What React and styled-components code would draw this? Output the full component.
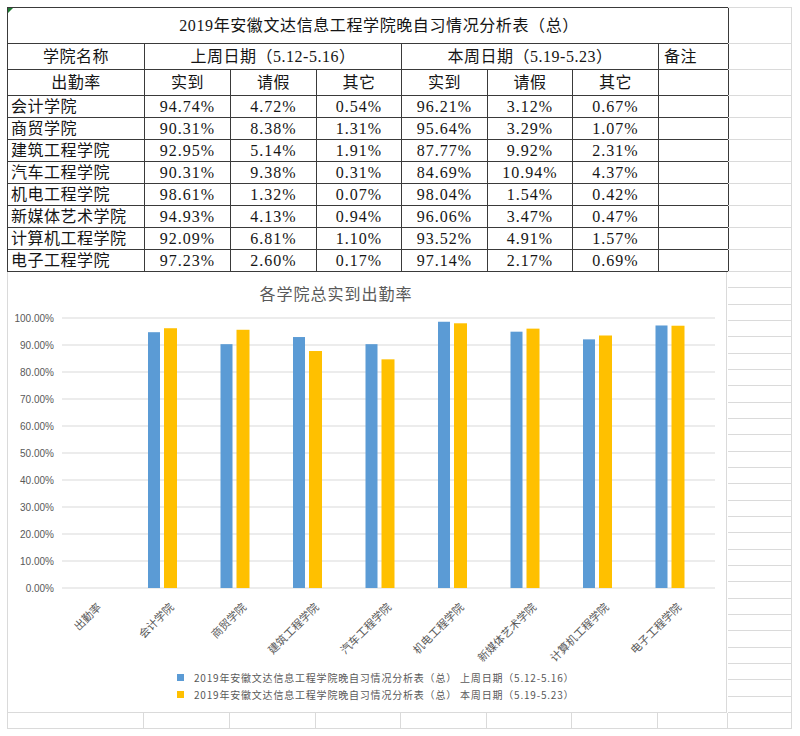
import React from 'react';
import styled, { createGlobalStyle } from 'styled-components';

const GlobalStyle = createGlobalStyle`
  html, body {
    margin: 0;
    padding: 0;
    background: #ffffff;
  }
`;

const colleges = [
  { name: '会计学院', last: ['94.74%', '4.72%', '0.54%'], cur: ['96.21%', '3.12%', '0.67%'] },
  { name: '商贸学院', last: ['90.31%', '8.38%', '1.31%'], cur: ['95.64%', '3.29%', '1.07%'] },
  { name: '建筑工程学院', last: ['92.95%', '5.14%', '1.91%'], cur: ['87.77%', '9.92%', '2.31%'] },
  { name: '汽车工程学院', last: ['90.31%', '9.38%', '0.31%'], cur: ['84.69%', '10.94%', '4.37%'] },
  { name: '机电工程学院', last: ['98.61%', '1.32%', '0.07%'], cur: ['98.04%', '1.54%', '0.42%'] },
  { name: '新媒体艺术学院', last: ['94.93%', '4.13%', '0.94%'], cur: ['96.06%', '3.47%', '0.47%'] },
  { name: '计算机工程学院', last: ['92.09%', '6.81%', '1.10%'], cur: ['93.52%', '4.91%', '1.57%'] },
  { name: '电子工程学院', last: ['97.23%', '2.60%', '0.17%'], cur: ['97.14%', '2.17%', '0.69%'] },
];

const colWidths = [137, 86, 86, 85, 86, 85, 86, 70];
const rowHeights = [36, 26, 26, 22, 22, 22, 22, 22, 22, 22, 22];

const BLUE = '#5b9bd5';
const GOLD = '#ffc000';
const GRID = '#dadada';

const Sheet = styled.div`
  display: flex;
  align-items: flex-start;
  padding: 7px 0 0 7px;
  width: 800px;
  box-sizing: border-box;
`;

const Main = styled.div`
  width: 721px;
  display: flex;
  flex-direction: column;
`;

const Side = styled.div`
  width: 64px;
  display: flex;
  flex-direction: column;
  border-top: 1px solid ${GRID};
`;

const SideCell = styled.div`
  height: ${p => p.$h}px;
  box-sizing: border-box;
  border-right: 1px solid ${GRID};
  border-bottom: 1px solid ${GRID};
`;

const SideStack = styled.div`
  height: 441px;
  display: flex;
  flex-direction: column;
`;

const SideLine = styled.div`
  flex: 1;
  border-right: 1px solid ${GRID};
  border-bottom: 1px solid ${GRID};
`;

const Table = styled.table`
  border-collapse: collapse;
  table-layout: fixed;
  width: 721px;
  font-family: "Liberation Serif", "Noto Sans CJK SC", serif;
  font-size: 16px;
  color: #151515;
  letter-spacing: 0.5px;
`;

const Col = styled.col`
  width: ${p => p.$w}px;
`;

const Row = styled.tr`
  height: ${p => p.$h}px;
`;

const Cell = styled.td`
  border: 1px solid #3a3a3a;
  padding: 0 0 0 ${p => p.$pad || 0}px;
  text-align: ${p => p.$align || 'center'};
  letter-spacing: ${p => (p.$num ? '1px' : '0.5px')};
  line-height: 1;
  white-space: nowrap;
  overflow: hidden;
`;

const TitleCell = styled(Cell)`
  position: relative;
  padding-left: 22px;
  padding-top: 1px;
  letter-spacing: 0.6px;

  &::before {
    content: '';
    position: absolute;
    top: 0;
    left: 0;
    border-top: 5px solid #1f7a33;
    border-right: 5px solid transparent;
  }
`;

const ChartBox = styled.div`
  width: 720px;
  height: 441px;
  box-sizing: border-box;
  border: 1px solid ${GRID};
  border-top: none;
  display: flex;
  flex-direction: column;
`;

const ChartTitle = styled.div`
  height: 36px;
  box-sizing: border-box;
  padding: 6px 62px 0 0;
  display: flex;
  align-items: center;
  justify-content: center;
  font-family: "Liberation Serif", "Noto Sans CJK SC", serif;
  font-size: 16px;
  letter-spacing: 1px;
  color: #595959;
`;

const Plot = styled.svg`
  display: block;
  width: 718px;
  height: 358px;
`;

const Legend = styled.div`
  display: flex;
  flex-direction: column;
  padding: 3px 0 0 169px;
`;

const LegendItem = styled.div`
  display: flex;
  align-items: center;
  height: 17px;
  font-family: "Noto Sans CJK SC", sans-serif;
  font-size: 10px;
  letter-spacing: 0.8px;
  color: #595959;
  white-space: nowrap;
`;

const Swatch = styled.span`
  width: 7px;
  height: 7px;
  background: ${p => p.$color};
  margin-right: 10px;
  flex-shrink: 0;
`;

const BottomRow = styled.div`
  display: flex;
  height: 16px;
`;

const BottomCell = styled.div`
  width: ${p => p.$w}px;
  box-sizing: border-box;
  border-right: 1px solid ${GRID};
  border-bottom: 1px solid ${GRID};

  &:first-child {
    border-left: 1px solid ${GRID};
  }
`;

const categories = ['出勤率', ...colleges.map(c => c.name)];
const ZERO_Y = 280;
const STEP = 27;
const catX = i => 82 + 72.5 * i;
const pct = s => parseFloat(s);

const BarChart = () => (
  <Plot viewBox="0 0 718 358">
    {Array.from({ length: 11 }, (_, k) => {
      const y = ZERO_Y - k * STEP;
      return (
        <g key={k}>
          <line x1="54" x2="707" y1={y} y2={y} stroke="#d9d9d9" strokeWidth="1" />
          <text
            x="46"
            y={y + 3.5}
            textAnchor="end"
            fontSize="10"
            fontFamily="'Liberation Sans', sans-serif"
            fill="#595959"
          >
            {(k * 10).toFixed(2)}%
          </text>
        </g>
      );
    })}
    {colleges.map((c, i) => {
      const cx = catX(i + 1);
      const h1 = (pct(c.last[0]) / 100) * STEP * 10;
      const h2 = (pct(c.cur[0]) / 100) * STEP * 10;
      return (
        <g key={c.name}>
          <rect x={cx - 14.5} y={ZERO_Y - h1} width="12" height={h1} fill={BLUE} />
          <rect x={cx + 1.5} y={ZERO_Y - h2} width="13" height={h2} fill={GOLD} />
        </g>
      );
    })}
    {categories.map((name, i) => (
      <text
        key={name}
        transform={`translate(${catX(i) + 12},300) rotate(-45)`}
        textAnchor="end"
        fontSize="11"
        fontFamily="'Noto Sans CJK SC', sans-serif"
        fill="#595959"
      >
        {name}
      </text>
    ))}
  </Plot>
);

const App = () => (
  <>
    <GlobalStyle />
    <Sheet>
      <Main>
        <Table>
          <colgroup>
            {colWidths.map((w, i) => (
              <Col key={i} $w={w} />
            ))}
          </colgroup>
          <tbody>
            <Row $h={36}>
              <TitleCell colSpan={8}>2019年安徽文达信息工程学院晚自习情况分析表（总）</TitleCell>
            </Row>
            <Row $h={26}>
              <Cell>学院名称</Cell>
              <Cell colSpan={3}>上周日期（5.12-5.16）</Cell>
              <Cell colSpan={3}>本周日期（5.19-5.23）</Cell>
              <Cell $align="left" $pad={5}>备注</Cell>
            </Row>
            <Row $h={26}>
              <Cell>出勤率</Cell>
              <Cell>实到</Cell>
              <Cell>请假</Cell>
              <Cell>其它</Cell>
              <Cell>实到</Cell>
              <Cell>请假</Cell>
              <Cell>其它</Cell>
              <Cell />
            </Row>
            {colleges.map(c => (
              <Row key={c.name} $h={22}>
                <Cell $align="left" $pad={3}>{c.name}</Cell>
                {c.last.map((v, i) => (
                  <Cell key={'l' + i} $num>{v}</Cell>
                ))}
                {c.cur.map((v, i) => (
                  <Cell key={'c' + i} $num>{v}</Cell>
                ))}
                <Cell />
              </Row>
            ))}
          </tbody>
        </Table>

        <ChartBox>
          <ChartTitle>各学院总实到出勤率</ChartTitle>
          <BarChart />
          <Legend>
            <LegendItem>
              <Swatch $color={BLUE} />
              2019年安徽文达信息工程学院晚自习情况分析表（总） 上周日期（5.12-5.16）
            </LegendItem>
            <LegendItem>
              <Swatch $color={GOLD} />
              2019年安徽文达信息工程学院晚自习情况分析表（总） 本周日期（5.19-5.23）
            </LegendItem>
          </Legend>
        </ChartBox>

        <BottomRow>
          {colWidths.map((w, i) => (
            <BottomCell key={i} $w={w} />
          ))}
        </BottomRow>
      </Main>

      <Side>
        {rowHeights.map((h, i) => (
          <SideCell key={i} $h={h} />
        ))}
        <SideStack>
          {Array.from({ length: 27 }, (_, i) => (
            <SideLine key={i} />
          ))}
        </SideStack>
        <SideCell $h={16} />
      </Side>
    </Sheet>
  </>
);

export default App;
